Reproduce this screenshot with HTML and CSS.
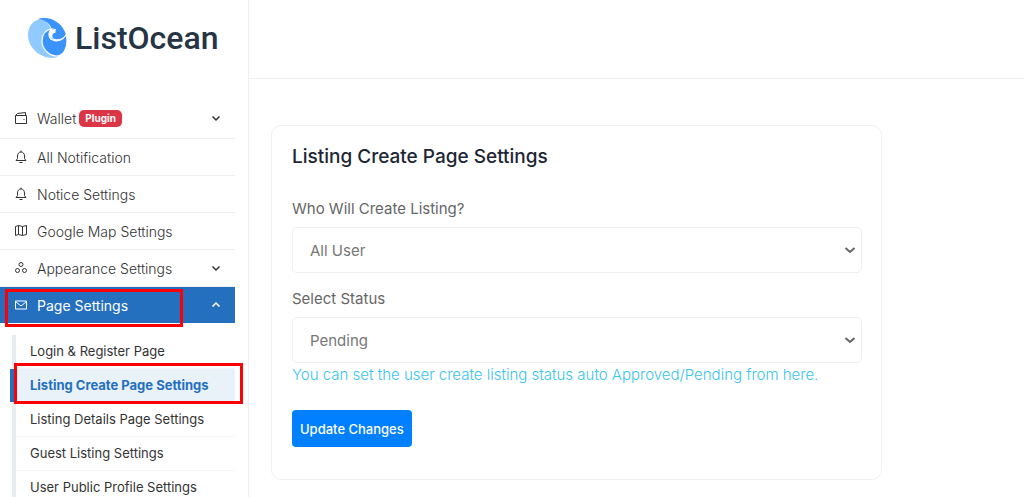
FILE: index.html
```html
<!DOCTYPE html>
<html lang="en">
<head>
    <meta charset="UTF-8">
    <meta name="viewport" content="width=device-width, initial-scale=1.0">
    <title>Listing Create Page Settings</title>
    <link rel="stylesheet" href="styles.css">
</head>
<body>
    <div class="dashboard">
        <aside class="sidebar">
            <a href="#" class="logo">
                <svg width="40" height="40" viewBox="0 0 40 40">
                    <path fill="#90caff" d="M12 1C4 3 0 9 0 17c0 12 11 23 25 23 2 0 4-1 5-2L23 12C21 5 17 2 12 1z"/>
                    <path fill="#3a93fb" d="M10 1C22-3 35 5 38 17c-3 4-8 5-11 4-4-1-5-5-3-8C23 6 18 2 10 1z"/>
                    <path fill="#3a93fb" stroke="#fff" stroke-width="1.200" d="M24 11c-7 1-10 6-10 12 0 8 7 15 15 15 7-1 10-8 10-15 0-2 0-4-1-6-3 5-9 7-13 5-4-1-6-7-1-11z"/>
                    <path fill="#fff" d="M28 11c-4 0-7 2-7 5 0 2 2 4 4 4-2-4 1-5 2-5s0-2 1-4z"/>
                </svg>
                <span>ListOcean</span>
            </a>

            <ul class="menu">
                <li>
                    <a href="#">
                        <svg class="icon" viewBox="0 0 14 14"><path d="M1.500 4.500h11v8h-11zM1.500 4.500l2-2 8-1v3M9.500 8.500h1"/></svg>
                        <span>Wallet</span>
                        <span class="badge">Plugin</span>
                        <svg class="arrow" viewBox="0 0 10 10"><path d="M1.500 3.500L5 7l3.500-3.500"/></svg>
                    </a>
                </li>
                <li>
                    <a href="#">
                        <svg class="icon" viewBox="0 0 14 14"><path d="M2 10.500h10l-1.500-2V6c0-2.500-1.500-4-3.500-4S3.500 3.500 3.500 6v2.500zM7 .500V2M5.500 12.500h3"/></svg>
                        <span>All Notification</span>
                    </a>
                </li>
                <li>
                    <a href="#">
                        <svg class="icon" viewBox="0 0 14 14"><path d="M2 10.500h10l-1.500-2V6c0-2.500-1.500-4-3.500-4S3.500 3.500 3.500 6v2.500zM7 .500V2M5.500 12.500h3"/></svg>
                        <span>Notice Settings</span>
                    </a>
                </li>
                <li>
                    <a href="#">
                        <svg class="icon" viewBox="0 0 14 14"><path d="M1.500 2.500l3-1 4 1 4-1v9l-4 1-4-1-3 1zM4.500 1.500v9M8.500 2.500v9"/></svg>
                        <span>Google Map Settings</span>
                    </a>
                </li>
                <li>
                    <a href="#">
                        <svg class="icon" viewBox="0 0 14 14"><circle cx="7" cy="3.500" r="2"/><circle cx="3.500" cy="9.500" r="2"/><circle cx="10.500" cy="9.500" r="2"/></svg>
                        <span>Appearance Settings</span>
                        <svg class="arrow" viewBox="0 0 10 10"><path d="M1.500 3.500L5 7l3.500-3.500"/></svg>
                    </a>
                </li>
                <li class="active">
                    <a href="#">
                        <svg class="icon" viewBox="0 0 14 14"><path d="M1.500 3h11v8h-11zM1.500 3.500L7 8l5.500-4.500"/></svg>
                        <span>Page Settings</span>
                        <svg class="arrow" viewBox="0 0 10 10"><path d="M1.500 6.500L5 3l3.500 3.500"/></svg>
                    </a>
                    <span class="highlight highlight-parent"></span>
                </li>
            </ul>

            <ul class="submenu">
                <li><a href="#">Login &amp; Register Page</a></li>
                <li class="selected">
                    <a href="#">Listing Create Page Settings</a>
                    <span class="highlight highlight-child"></span>
                </li>
                <li><a href="#">Listing Details Page Settings</a></li>
                <li><a href="#">Guest Listing Settings</a></li>
                <li><a href="#">User Public Profile Settings</a></li>
            </ul>
        </aside>

        <main class="main">
            <header class="topbar"></header>
            <div class="content">
                <form class="card">
                    <h4>Listing Create Page Settings</h4>
                    <div class="field">
                        <label for="whoCreate">Who Will Create Listing?</label>
                        <select id="whoCreate">
                            <option>All User</option>
                            <option>Verified User</option>
                        </select>
                    </div>
                    <div class="field">
                        <label for="status">Select Status</label>
                        <select id="status">
                            <option>Pending</option>
                            <option>Approved</option>
                        </select>
                        <p class="info">You can set the user create listing status auto Approved/Pending from here.</p>
                    </div>
                    <button type="button">Update Changes</button>
                </form>
            </div>
        </main>
    </div>
</body>
</html>
```

FILE: styles.css
```css
* {
    box-sizing: border-box;
}
body {
    margin: 0;
    font-family: Inter, "Open Sans", sans-serif;
    font-size: 14px;
    color: #333;
    background: #fff;
}
a {
    color: inherit;
    text-decoration: none;
}
ul {
    list-style: none;
    margin: 0;
    padding: 0;
}
.dashboard {
    display: flex;
    height: 100vh;
    overflow: hidden;
}

/* Sidebar */
.sidebar {
    flex: 0 0 249px;
    border-right: 1px solid #eeeff3;
}
.logo {
    display: flex;
    align-items: center;
    gap: 7px;
    height: 76px;
    margin-bottom: 24px;
    padding-left: 28px;
    font-family: Roboto, sans-serif;
    font-size: 32px;
    font-weight: 500;
    color: #263445;
}
.menu,
.submenu {
    margin-right: 13px;
}
.menu li {
    position: relative;
    border-bottom: 1px solid #eeeff3;
}
.menu li:first-child {
    padding-bottom: 2px;
}
.menu a {
    display: flex;
    align-items: center;
    height: 36px;
    padding: 0 14px;
    font-weight: 300;
}
.icon {
    width: 14px;
    height: 14px;
    margin-right: 9px;
    fill: none;
    stroke: currentColor;
}
.arrow {
    width: 10px;
    height: 10px;
    margin-left: auto;
    fill: none;
    stroke: currentColor;
    stroke-width: 1.500;
}
.badge {
    margin-left: 3px;
    padding: 0 6px;
    border-radius: 5px;
    background: #dc3545;
    color: #fff;
    font-size: 10px;
    font-weight: 700;
    line-height: 17px;
}
.menu .active {
    background: #2470be;
    border-bottom: 0;
    color: #fff;
}
.menu .active a {
    font-weight: 400;
}

/* Submenu */
.submenu {
    margin-top: 12px;
    margin-left: 12px;
    border-left: 4px solid #e9ecef;
}
.submenu li {
    position: relative;
    border-bottom: 1px solid #f3f7fb;
}
.submenu a {
    display: block;
    padding-left: 14px;
    font-size: 13px;
    line-height: 33px;
}
.submenu .selected {
    background: #e9f1f9;
    color: #2470be;
    font-weight: 700;
}
.submenu .selected::before {
    content: "";
    position: absolute;
    left: -6px;
    top: 0;
    bottom: 0;
    width: 4px;
    background: #2470be;
}

/* Red frames */
.highlight {
    position: absolute;
    border: 3px solid #fc0008;
    pointer-events: none;
}
.highlight-parent {
    left: 5px;
    right: 52px;
    top: 2px;
    bottom: -4px;
}
.highlight-child {
    left: -2px;
    right: -8px;
    top: -6px;
    bottom: -2px;
}

/* Content */
.main {
    flex: 1;
    min-width: 0;
}
.topbar {
    height: 79px;
    border-bottom: 1px solid #eeeff3;
}
.content {
    padding: 46px 22px;
}
.card {
    max-width: 611px;
    padding: 19px 19px 32px 20px;
    border: 1px solid #f0f1f3;
    border-radius: 10px;
    color: #666;
}
.card h4 {
    margin: 0 0 28px;
    font-size: 19px;
    font-weight: 500;
    line-height: 24px;
    color: #1d2635;
}
.field {
    margin-bottom: 14px;
}
.field label {
    display: block;
    margin-bottom: 6px;
    font-size: 15px;
    line-height: 24px;
}
.field select {
    display: block;
    width: 100%;
    height: 46px;
    padding: 0 17px;
    border: 1px solid #eeeff3;
    border-radius: 5px;
    appearance: none;
    background: url("data:image/svg+xml,%3Csvg xmlns='http://www.w3.org/2000/svg' viewBox='0 0 12 12'%3E%3Cpath fill='none' stroke='%23666' stroke-width='2' d='M1.500 4L6 8l4.500-4'/%3E%3C/svg%3E") no-repeat right 5px center / 12px 12px;
    color: #777;
    font: inherit;
    font-size: 15px;
}
.info {
    margin: 0;
    font-size: 15px;
    font-weight: 300;
    line-height: 24px;
    color: #3ac4ee;
}
.card button {
    height: 37px;
    margin-top: 9px;
    padding: 0 8px;
    border: 0;
    border-radius: 4px;
    background: #0080ff;
    color: #fff;
    font: inherit;
    font-size: 13px;
    font-weight: 500;
}
```
